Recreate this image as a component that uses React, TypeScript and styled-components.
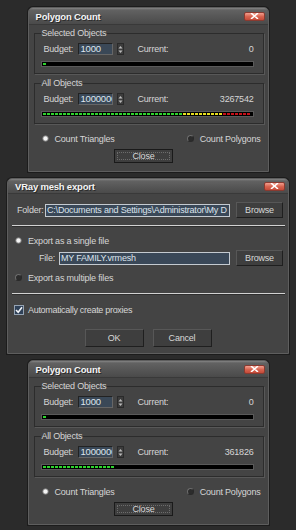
import React from 'react'
import styled, { createGlobalStyle, css } from 'styled-components'

const GlobalStyle = createGlobalStyle`
  html, body {
    margin: 0;
    padding: 0;
    background: #2b2b2b;
  }
  body {
    font-family: "Liberation Sans", Arial, sans-serif;
    font-size: 9px;
    letter-spacing: -0.2px;
    color: #d6d6d6;
  }
  * {
    box-sizing: border-box;
  }
`

const Page = styled.div`
  width: 296px;
  height: 530px;
  display: flex;
  flex-direction: column;
  align-items: center;
  gap: 6px;
  padding-top: 7px;
  overflow: hidden;
`

const Window = styled.div<{ $width: number }>`
  width: ${(p) => p.$width}px;
  background: #444444;
  border: 1px solid #5e5e5e;
  border-radius: 5px 5px 0 0;
  box-shadow: 0 0 0 1px #1c1c1c;
  display: flex;
  flex-direction: column;
`

const TitleBar = styled.div<{ $height: number }>`
  height: ${(p) => p.$height}px;
  display: flex;
  align-items: center;
  justify-content: space-between;
  padding: 0 3px 0 7px;
  border-radius: 4px 4px 0 0;
  background: linear-gradient(to bottom, #858585 0, #626262 2px, #565656 55%, #4a4a4a 100%);
  border-bottom: 1px solid #393939;
`

const Title = styled.span`
  font-size: 9.5px;
  font-weight: bold;
  letter-spacing: -0.2px;
  color: #f4f4f4;
  text-shadow: 1px 1px 0 #2a2a2a;
`

const CloseBox = styled.div`
  width: 21px;
  height: 9px;
  border-radius: 2px;
  border: 1px solid #8a3a30;
  background: linear-gradient(to bottom, #f3a090 0, #d86450 50%, #c44a38 100%);
  display: flex;
  align-items: center;
  justify-content: center;
`

const PolyBody = styled.div`
  display: flex;
  flex-direction: column;
  padding: 3px 4px 8px 5px;
`

const Group = styled.fieldset`
  margin: 0;
  padding: 4px 9px 6px 6px;
  border: 1px solid #2c2c2c;
  box-shadow: 1px 1px 0 #585858;
  min-inline-size: 0;

  & + & {
    margin-top: 4px;
  }
`

const GroupTitle = styled.legend`
  padding: 0 1px;
  line-height: 11px;
`

const BudgetRow = styled.div`
  display: flex;
  align-items: center;
  height: 12px;
  padding-left: 3px;
`

const BudgetLabel = styled.span`
  width: 34px;
  flex: none;
`

const NumberField = styled.div`
  width: 35px;
  height: 12px;
  flex: none;
  overflow: hidden;
  white-space: nowrap;
  padding: 0 0 0 2px;
  line-height: 10px;
  font-size: 9.5px;
  color: #dfe6ee;
  background: #3a4857;
  border: 1px solid;
  border-color: #222 #666 #666 #222;
`

const Spinner = styled.div`
  width: 7px;
  height: 12px;
  margin-left: 4px;
  flex: none;
  background: #3c3c3c;
  border: 1px solid #2a2a2a;
  display: flex;
  align-items: center;
  justify-content: center;
`

const CurrentLabel = styled.span`
  margin-left: 14px;
`

const Readout = styled.span`
  flex: 1;
  text-align: right;
`

const Meter = styled.div`
  margin-top: 6px;
  height: 6px;
  padding: 1px;
  background: #000;
  border: 1px solid #5a5a5a;
  display: flex;
`

const MeterFill = styled.div<{ $color: string }>`
  height: 2px;
  flex: none;
  background: repeating-linear-gradient(
    90deg,
    ${(p) => p.$color} 0 3px,
    transparent 3px 4px
  );
`

const ModeRow = styled.div`
  display: flex;
  align-items: center;
  justify-content: space-between;
  margin-top: 9px;
  padding: 0 3px 0 8px;
`

const RadioOption = styled.label`
  display: flex;
  align-items: center;
  gap: 6px;
  height: 11px;
`

const RadioDot = styled.span<{ $checked?: boolean }>`
  width: 7px;
  height: 7px;
  flex: none;
  border-radius: 50%;
  ${(p) =>
    p.$checked
      ? css`
          background: radial-gradient(circle, #f4f4f4 0 1.7px, #9a9a9a 2.4px, #4a4a4a 3.5px);
        `
      : css`
          background: #2c2c2c;
          border: 1px solid;
          border-color: #6c6c6c #2a2a2a #2a2a2a #6c6c6c;
        `}
`

const ButtonRow = styled.div<{ $gap?: number; $shift?: number }>`
  display: flex;
  justify-content: center;
  gap: ${(p) => p.$gap ?? 0}px;
  padding-right: ${(p) => p.$shift ?? 0}px;
`

const PushButton = styled.button<{ $width: number; $height: number; $focused?: boolean }>`
  position: relative;
  width: ${(p) => p.$width}px;
  height: ${(p) => p.$height}px;
  flex: none;
  padding: 0;
  font: inherit;
  letter-spacing: -0.2px;
  color: #d8d8d8;
  background: #3e3e3e;
  border: 1px solid;
  border-color: #575757 #1f1f1f #1f1f1f #575757;

  ${(p) =>
    p.$focused &&
    css`
      border-color: #1a1a1a;
      &::after {
        content: '';
        position: absolute;
        inset: 2px;
        border: 1px dotted #6c6c6c;
      }
    `}
`

const ExportBody = styled.div`
  display: flex;
  flex-direction: column;
  padding: 8px 0 6px 0;
`

const PathRow = styled.div<{ $indent: number; $top?: number }>`
  display: flex;
  align-items: center;
  height: 16px;
  margin-top: ${(p) => p.$top ?? 0}px;
  padding: 0 5px 0 ${(p) => p.$indent}px;
`

const PathLabel = styled.span`
  margin-right: auto;
`

const PathField = styled.div<{ $width: number }>`
  width: ${(p) => p.$width}px;
  height: 13px;
  flex: none;
  overflow: hidden;
  white-space: nowrap;
  padding-left: 1px;
  line-height: 11px;
  color: #dde4ec;
  background: #3a4858;
  border: 1px solid #c4cad0;
  margin-right: 6px;
`

const Separator = styled.div<{ $top: number }>`
  height: 2px;
  margin: ${(p) => p.$top}px 3px 0 4px;
  border-top: 1px solid #d2d2d2;
  border-bottom: 1px solid #2e2e2e;
`

const ExportOption = styled(RadioOption)<{ $top: number }>`
  margin-top: ${(p) => p.$top}px;
  padding-left: 7px;
`

const CheckRow = styled.label`
  display: flex;
  align-items: center;
  gap: 4px;
  height: 11px;
  margin-top: 9px;
  padding-left: 6px;
  letter-spacing: -0.3px;
`

const CheckBox = styled.span`
  width: 10px;
  height: 10px;
  flex: none;
  background: #2f4158;
  border: 1px solid #95a3b3;
  display: flex;
  align-items: center;
  justify-content: center;
`

const ExportButtons = styled(ButtonRow)`
  margin-top: 14px;
`

const CloseRow = styled(ButtonRow)`
  margin-top: 5px;
`

const CloseIcon = () => (
  <svg width="9" height="6" viewBox="0 0 9 6">
    <path d="M1.5 0.5 L7.5 5.5 M7.5 0.5 L1.5 5.5" stroke="#fff" strokeWidth="1.6" strokeLinecap="round" />
  </svg>
)

const SpinArrows = () => (
  <svg width="5" height="9" viewBox="0 0 5 9">
    <path d="M2.5 1 L4.5 3.5 L0.5 3.5 Z" fill="#bdbdbd" />
    <path d="M0.5 5.5 L4.5 5.5 L2.5 8 Z" fill="#bdbdbd" />
  </svg>
)

const CheckMark = () => (
  <svg width="8" height="8" viewBox="0 0 8 8">
    <path d="M1 4 L3.2 6.3 L7 1.3" fill="none" stroke="#f2f4f8" strokeWidth="1.6" />
  </svg>
)

type Band = { color: string; count: number }

const GREEN = '#2fd42f'
const YELLOW = '#e8e020'
const RED = '#c8101a'

const BudgetGroup: React.FC<{ title: string; budget: string; current: string; bands: Band[] }> = ({
  title,
  budget,
  current,
  bands,
}) => (
  <Group>
    <GroupTitle>{title}</GroupTitle>
    <BudgetRow>
      <BudgetLabel>Budget:</BudgetLabel>
      <NumberField>{budget}</NumberField>
      <Spinner>
        <SpinArrows />
      </Spinner>
      <CurrentLabel>Current:</CurrentLabel>
      <Readout>{current}</Readout>
    </BudgetRow>
    <Meter>
      {bands.map((b, i) => (
        <MeterFill key={i} $color={b.color} style={{ width: b.count * 4 }} />
      ))}
    </Meter>
  </Group>
)

const PolygonCountDialog: React.FC<{ total: string; bands: Band[] }> = ({ total, bands }) => (
  <Window $width={241}>
    <TitleBar $height={17}>
      <Title>Polygon Count</Title>
      <CloseBox>
        <CloseIcon />
      </CloseBox>
    </TitleBar>
    <PolyBody>
      <BudgetGroup title="Selected Objects" budget="1000" current="0" bands={[{ color: GREEN, count: 1 }]} />
      <BudgetGroup title="All Objects" budget="1000000" current={total} bands={bands} />
      <ModeRow>
        <RadioOption>
          <RadioDot $checked />
          Count Triangles
        </RadioOption>
        <RadioOption>
          <RadioDot />
          Count Polygons
        </RadioOption>
      </ModeRow>
      <CloseRow $shift={10}>
        <PushButton $width={59} $height={14} $focused>
          Close
        </PushButton>
      </CloseRow>
    </PolyBody>
  </Window>
)

const MeshExportDialog = () => (
  <Window $width={282}>
    <TitleBar $height={15}>
      <Title>VRay mesh export</Title>
      <CloseBox>
        <CloseIcon />
      </CloseBox>
    </TitleBar>
    <ExportBody>
      <PathRow $indent={9}>
        <PathLabel>Folder:</PathLabel>
        <PathField $width={185}>{'C:\\Documents and Settings\\Administrator\\My D'}</PathField>
        <PushButton $width={47} $height={16}>
          Browse
        </PushButton>
      </PathRow>
      <Separator $top={7} />
      <ExportOption $top={8}>
        <RadioDot $checked />
        Export as a single file
      </ExportOption>
      <PathRow $indent={31} $top={4}>
        <PathLabel>File:</PathLabel>
        <PathField $width={171}>MY FAMILY.vrmesh</PathField>
        <PushButton $width={47} $height={16}>
          Browse
        </PushButton>
      </PathRow>
      <ExportOption $top={6}>
        <RadioDot />
        Export as multiple files
      </ExportOption>
      <Separator $top={10} />
      <CheckRow>
        <CheckBox>
          <CheckMark />
        </CheckBox>
        Automatically create proxies
      </CheckRow>
      <ExportButtons $gap={9}>
        <PushButton $width={59} $height={18}>
          OK
        </PushButton>
        <PushButton $width={59} $height={18}>
          Cancel
        </PushButton>
      </ExportButtons>
    </ExportBody>
  </Window>
)

export default function App() {
  return (
    <>
      <GlobalStyle />
      <Page>
        <PolygonCountDialog
          total="3267542"
          bands={[
            { color: GREEN, count: 35 },
            { color: YELLOW, count: 10 },
            { color: RED, count: 7 },
          ]}
        />
        <MeshExportDialog />
        <PolygonCountDialog total="361826" bands={[{ color: GREEN, count: 18 }]} />
      </Page>
    </>
  )
}
